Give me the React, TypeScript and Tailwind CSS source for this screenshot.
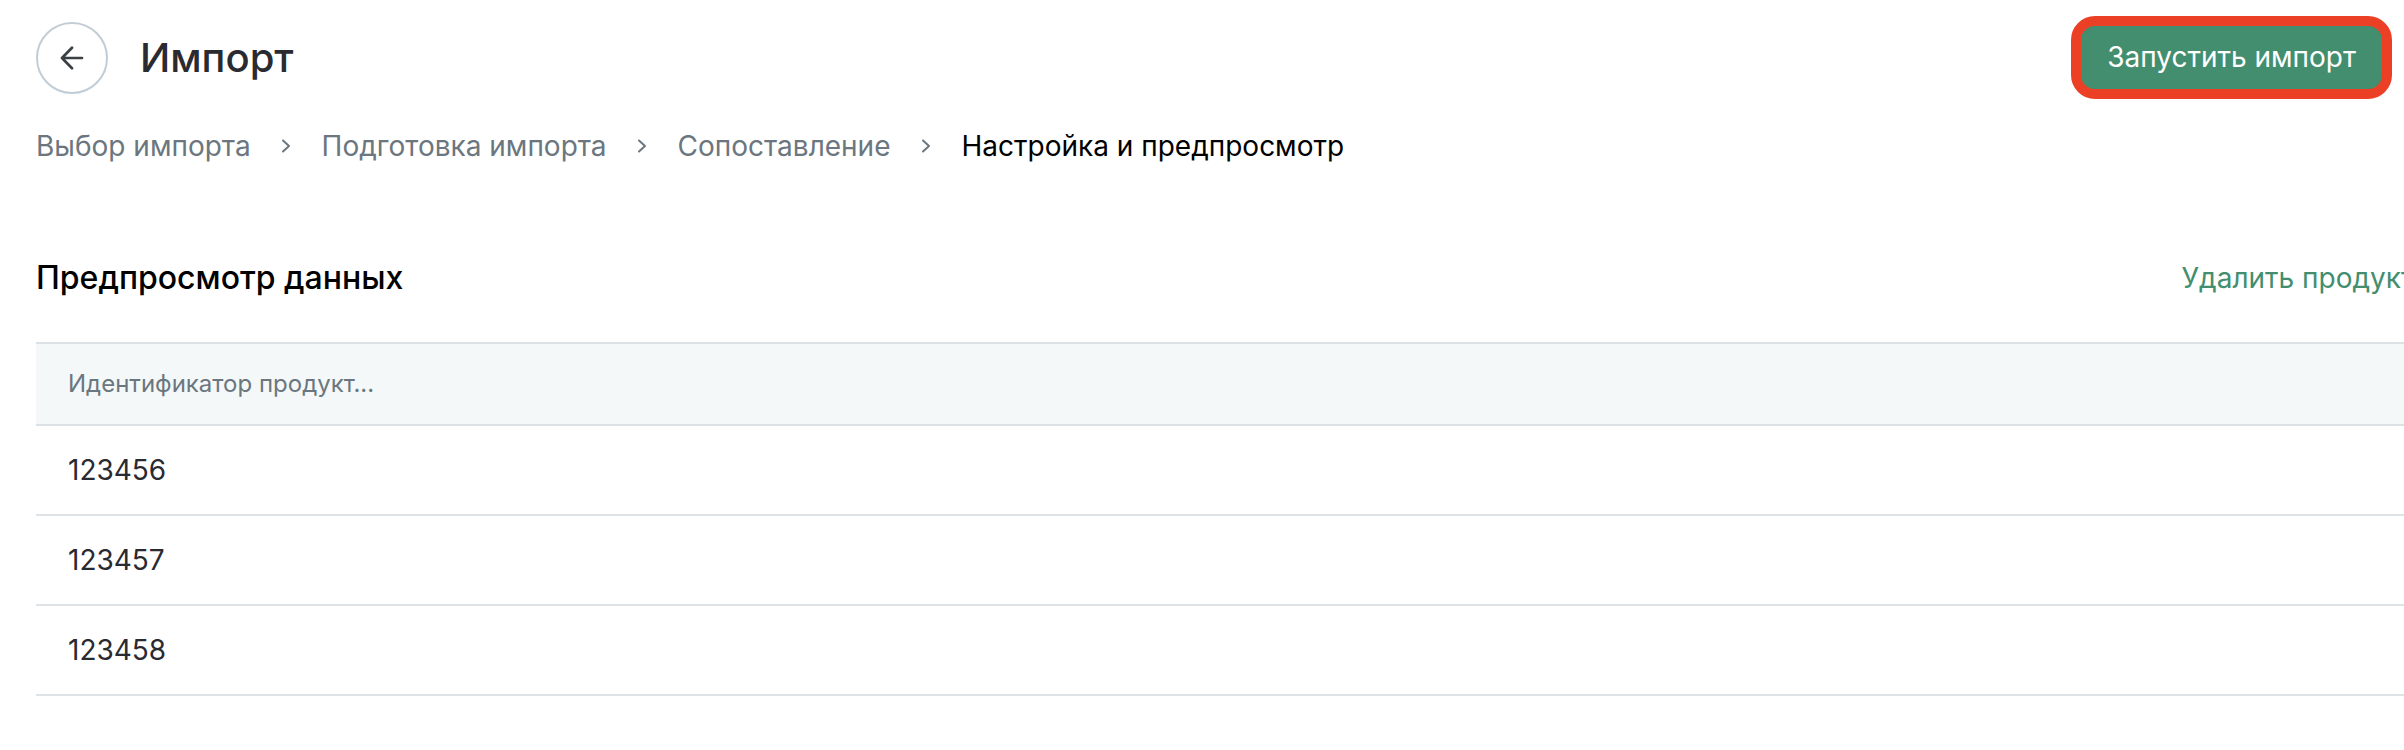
const previousSteps = ['Выбор импорта', 'Подготовка импорта', 'Сопоставление'];
const productIds = ['123456', '123457', '123458'];

function ArrowLeft() {
  return (
    <svg aria-hidden="true" className="h-6 w-6" viewBox="0 0 24 24" fill="none" stroke="currentColor" strokeWidth="2.7" strokeLinecap="round" strokeLinejoin="round">
      <path d="M22 12H2M12 1.8L2 12l10 10.2" />
    </svg>
  );
}

function Chevron() {
  return (
    <svg aria-hidden="true" className="h-4 w-3" viewBox="0 0 12 16" fill="none" stroke="currentColor" strokeWidth="2" strokeLinecap="round" strokeLinejoin="round">
      <path d="M3 2.5L9 8l-6 5.5" />
    </svg>
  );
}

export default function App() {
  return (
    <div className="overflow-hidden bg-white pl-9 font-['Inter',sans-serif] text-[28px] leading-10 text-[#2a2a31]">
      <header className="flex items-center justify-between pr-3 pt-4">
        <div className="flex items-center gap-8">
          <button type="button" aria-label="Назад" className="flex h-18 w-18 items-center justify-center rounded-full border-2 border-[#c1cdd6] text-[#3b4044]">
            <ArrowLeft />
          </button>
          <h1 className="text-[40px] font-medium leading-12">Импорт</h1>
        </div>
        <button type="button" className="rounded-3xl border-10 border-[#eb4026] bg-[#428e6e] px-[26px] py-3 leading-[39px] text-white">
          Запустить импорт
        </button>
      </header>

      <nav aria-label="Шаги импорта" className="mt-[27px]">
        <ol className="flex items-center text-[#6b767e]">
          {previousSteps.map((step) => (
            <li key={step} className="flex items-center">
              <a href="#">{step}</a>
              <span className="flex w-[71px] justify-center">
                <Chevron />
              </span>
            </li>
          ))}
          <li aria-current="step" className="text-black">Настройка и предпросмотр</li>
        </ol>
      </nav>

      <section className="mt-23">
        <div className="-mr-2.5 flex items-center justify-between">
          <h2 className="text-[32px] font-medium leading-10 text-black">Предпросмотр данных</h2>
          <button type="button" className="whitespace-nowrap text-[#428e6e]">Удалить продукт</button>
        </div>
        <table className="mt-11 w-full border-separate border-spacing-0 text-left">
          <thead>
            <tr>
              <th scope="col" className="border-y-2 border-[#dae1e7] bg-[#f4f8f9] px-8 py-5 text-2xl leading-10 font-normal text-[#6b767e]">
                Идентификатор продукт...
              </th>
            </tr>
          </thead>
          <tbody>
            {productIds.map((id) => (
              <tr key={id}>
                <td className="border-b-2 border-[#dee3e7] px-8 py-6">{id}</td>
              </tr>
            ))}
          </tbody>
        </table>
      </section>
    </div>
  );
}
